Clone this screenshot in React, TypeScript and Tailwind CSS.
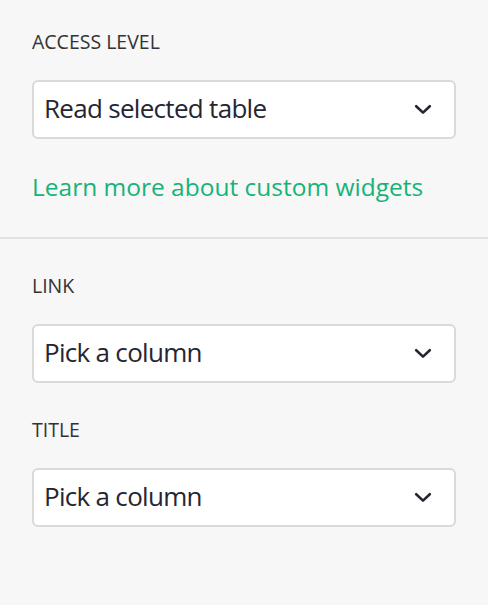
import React from "react";

function Chevron() {
  return (
    <svg width="18" height="11" viewBox="0 0 18 11" fill="none" className="shrink-0">
      <path d="M2.2 2.2 L9 8.6 L15.8 2.2" stroke="#262633" strokeWidth="2.6" strokeLinecap="round" strokeLinejoin="round" />
    </svg>
  );
}

function Select({ value }: { value: string }) {
  return (
    <div className="flex h-[59px] items-center justify-between rounded-[6px] border-2 border-[#d9d9d9] bg-white pl-[10px] pr-[22px]">
      <span className="pb-[3px] text-[26px] leading-none tracking-[-0.7px] text-[#262633]">{value}</span>
      <Chevron />
    </div>
  );
}

function Label({ children }: { children: React.ReactNode }) {
  return <div className="text-[19.5px] leading-none text-[#333333]">{children}</div>;
}

export default function App() {
  return (
    <div
      className="h-[605px] w-[488px] bg-[#f7f7f7]"
      style={{ fontFamily: '"Open Sans", "Noto Sans", sans-serif' }}
    >
      <div className="px-[32px] pt-[32px]">
        <Label>ACCESS LEVEL</Label>
        <div className="mt-[28px]">
          <Select value="Read selected table" />
        </div>
        <div className="mt-[36.5px] text-[24.5px] leading-none text-[#16b378]">Learn more about custom widgets</div>
      </div>
      <div className="mt-[37.5px] h-[2px] bg-[#e2e2e2]" />
      <div className="px-[32px] pt-[37px]">
        <Label>LINK</Label>
        <div className="mt-[28.5px]">
          <Select value="Pick a column" />
        </div>
        <div className="mt-[37px]">
          <Label>TITLE</Label>
        </div>
        <div className="mt-[28.5px]">
          <Select value="Pick a column" />
        </div>
      </div>
    </div>
  );
}
